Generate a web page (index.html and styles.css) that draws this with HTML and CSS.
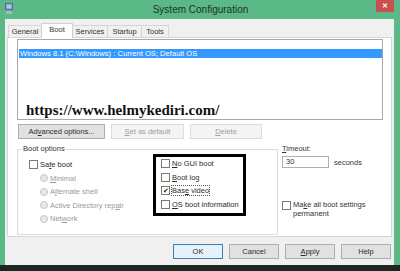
FILE: index.html
```html
<!doctype html>
<html lang="en">
<head>
    <meta charset="UTF-8" />
    <title>System Configuration</title>
    <link rel="stylesheet" href="styles.css">
</head>
<body>
    <div class="window">
        <div class="titlebar">
            <svg class="app-icon" width="8" height="11" viewBox="0 0 8 11">
                <rect x="0.5" y="0.5" width="7" height="6" fill="#6d93c9" stroke="#5a6f8f" />
                <rect x="1.5" y="1.5" width="5" height="4" fill="#a9c8ee" />
                <rect x="2" y="7" width="4" height="1.5" fill="#8795a8" />
                <rect x="1" y="8.5" width="6" height="2" fill="#b8c2cf" />
            </svg>
            <span class="title">System Configuration</span>
            <span class="close">&#x2715;</span>
        </div>

        <div class="client">
            <div class="tabs">
                <span class="tab tab-general">General</span>
                <span class="tab tab-boot active">Boot</span>
                <span class="tab tab-services">Services</span>
                <span class="tab tab-startup">Startup</span>
                <span class="tab tab-tools">Tools</span>
            </div>

            <div class="panel">
                <div class="listbox">
                    <div class="list-item selected">Windows 8.1 (C:\Windows) : Current OS; Default OS</div>
                    <div class="watermark">https://www.helmykediri.com/</div>
                </div>

                <div class="btn-row">
                    <span class="btn btn-advanced">Ad<u>v</u>anced options...</span>
                    <span class="btn disabled btn-default"><u>S</u>et as default</span>
                    <span class="btn disabled btn-delete"><u>D</u>elete</span>
                </div>

                <div class="lower">
                    <div class="group">
                        <div class="group-label">Boot options</div>
                        <div class="group-body">
                            <div class="col-left">
                                <div class="row"><span class="check"></span>Sa<u>f</u>e boot</div>
                                <div class="row sub disabled"><span class="radio"></span><u>M</u>inimal</div>
                                <div class="row sub disabled"><span class="radio"></span>A<u>l</u>ternate shell</div>
                                <div class="row sub disabled"><span class="radio"></span>Active Directory rep<u>a</u>ir</div>
                                <div class="row sub disabled"><span class="radio"></span>Net<u>w</u>ork</div>
                            </div>
                            <div class="col-right">
                                <div class="row"><span class="check"></span><u>N</u>o GUI boot</div>
                                <div class="row"><span class="check"></span><u>B</u>oot log</div>
                                <div class="row"><span class="check checked">&#10004;</span><span class="focus">Bas<u>e</u> video</span></div>
                                <div class="row"><span class="check"></span><u>O</u>S boot information</div>
                            </div>
                        </div>
                    </div>

                    <div class="timeout">
                        <div class="timeout-label"><u>T</u>imeout:</div>
                        <div class="timeout-line">
                            <span class="input">30</span>
                            <span>seconds</span>
                        </div>
                        <div class="permanent">
                            <span class="check"></span>
                            <span>Ma<u>k</u>e all boot settings<br>permanent</span>
                        </div>
                    </div>
                </div>
            </div>

            <div class="dialog-buttons">
                <span class="btn btn-ok">OK</span>
                <span class="btn">Cancel</span>
                <span class="btn"><u>A</u>pply</span>
                <span class="btn">Help</span>
            </div>
        </div>

        <div class="bottom-strip"></div>
    </div>
</body>
</html>
```

FILE: styles.css
```css
* {
    margin: 0;
    padding: 0;
    box-sizing: border-box;
}

body {
    font-family: "Liberation Sans", Arial, sans-serif;
    font-size: 7.5px;
    color: #2b2b2b;
    background: #1d2621;
}

u {
    text-decoration: underline;
    text-underline-offset: 1px;
}

.window {
    width: 400px;
    height: 271px;
    background: #5bb887;
    display: flex;
    flex-direction: column;
}

/* title bar */
.titlebar {
    height: 19px;
    display: flex;
    align-items: flex-start;
    padding-left: 5px;
    padding-right: 6px;
}

.app-icon {
    margin-top: 3px;
}

.title {
    flex: 1;
    text-align: center;
    font-size: 10px;
    line-height: 20px;
    color: #22332a;
    padding-left: 12px;
}

.close {
    width: 18px;
    height: 12px;
    background: #c9504f;
    color: white;
    font-size: 7px;
    font-weight: bold;
    line-height: 12px;
    text-align: center;
}

/* dialog client area */
.client {
    height: 246px;
    margin: 0 6px 0 5px;
    background: #f0f0f0;
}

.tabs {
    display: flex;
    align-items: flex-end;
    height: 18px;
    padding-left: 3px;
}

.tab {
    height: 12px;
    line-height: 11px;
    text-align: center;
    border: 1px solid #d6d6d6;
    border-bottom: none;
    margin-right: -1px;
    background: #f0f0f0;
    color: #333;
}

.tab-general { width: 34px; }
.tab-boot { width: 32px; }
.tab-services { width: 36px; }
.tab-startup { width: 35px; }
.tab-tools { width: 28px; }

.tab.active {
    height: 15px;
    background: #ffffff;
    border-color: #d0d0d0;
    position: relative;
    margin-bottom: -1px;
    z-index: 1;
}

.panel {
    height: 200px;
    margin: 0 2px;
    background: #ffffff;
    border: 1px solid #d6d6d6;
    padding: 1px 8px 0 9px;
}

.listbox {
    height: 81px;
    border: 1px solid #a8a8a8;
    display: flex;
    flex-direction: column;
    padding: 9px 0 1px 1px;
}

.list-item {
    height: 9px;
    line-height: 9px;
    padding-left: 1px;
    font-size: 7.6px;
}

.list-item.selected {
    background: #3399ff;
    color: #ffffff;
}

.watermark {
    margin-top: auto;
    margin-left: 7px;
    font-family: "Liberation Serif", serif;
    font-weight: bold;
    font-size: 15px;
    line-height: 15px;
    color: #111;
}

/* buttons */
.btn-row {
    display: flex;
    gap: 6px;
    margin: 4px 0 0 1px;
}

.btn {
    height: 15px;
    line-height: 13px;
    border: 1px solid #adadad;
    background: #e1e1e1;
    text-align: center;
    color: #2b2b2b;
}

.btn.disabled {
    background: #f4f4f4;
    border-color: #dcdcdc;
    color: #a0a0a0;
}

.btn-advanced { width: 87px; }
.btn-default { width: 73px; }
.btn-delete { width: 72px; }

/* boot options */
.lower {
    display: flex;
    margin-top: 5px;
}

.group {
    width: 261px;
    height: 86px;
    border: 1px solid #dcdcdc;
    border-top: none;
    margin-top: 5px;
}

.group::before {
    content: "";
    display: block;
    border-top: 1px solid #dcdcdc;
}

.group-label {
    width: fit-content;
    margin: -6px 0 0 4px;
    padding: 0 1px;
    background: #ffffff;
    line-height: 10px;
    color: #333;
}

.group-body {
    display: grid;
    grid-template-columns: 124px 93px;
    padding-left: 11px;
}

.col-left {
    padding-top: 4px;
}

.col-right {
    border: 3px solid #000;
    height: 62px;
    padding-left: 5px;
}

.row {
    height: 13.5px;
    display: flex;
    align-items: center;
    white-space: nowrap;
}

.row.sub {
    padding-left: 11px;
}

.row.disabled {
    color: #9a9a9a;
}

.check {
    width: 9px;
    height: 9px;
    border: 1px solid #7a7a7a;
    background: #fff;
    margin-right: 2px;
    flex-shrink: 0;
    font-size: 7px;
    line-height: 7px;
    text-align: center;
    color: #222;
}

.radio {
    width: 8px;
    height: 8px;
    border-radius: 50%;
    border: 1px solid #c6c6c6;
    background: #e8e8e8;
    margin-right: 2px;
}

.focus {
    outline: 1px dotted #555;
    line-height: 9px;
}

/* timeout */
.timeout {
    margin-left: 4px;
    color: #333;
}

.timeout-label {
    line-height: 10px;
}

.timeout-line {
    display: flex;
    align-items: center;
    gap: 5px;
    margin-top: 2px;
}

.input {
    width: 47px;
    height: 12px;
    border: 1px solid #b0b0b0;
    background: #fff;
    line-height: 10px;
    padding-left: 3px;
}

.permanent {
    display: flex;
    align-items: flex-start;
    margin-top: 32px;
    line-height: 9px;
}

.permanent .check {
    margin-top: 1px;
}

/* bottom buttons */
.dialog-buttons {
    display: flex;
    justify-content: flex-end;
    gap: 6px;
    margin: 7px 3px 0 0;
}

.dialog-buttons .btn {
    width: 50px;
}

.btn-ok {
    border-color: #3c7fb1;
    background: #e5f1fb;
}

.bottom-strip {
    height: 6px;
    background: #1d2621;
}
```
